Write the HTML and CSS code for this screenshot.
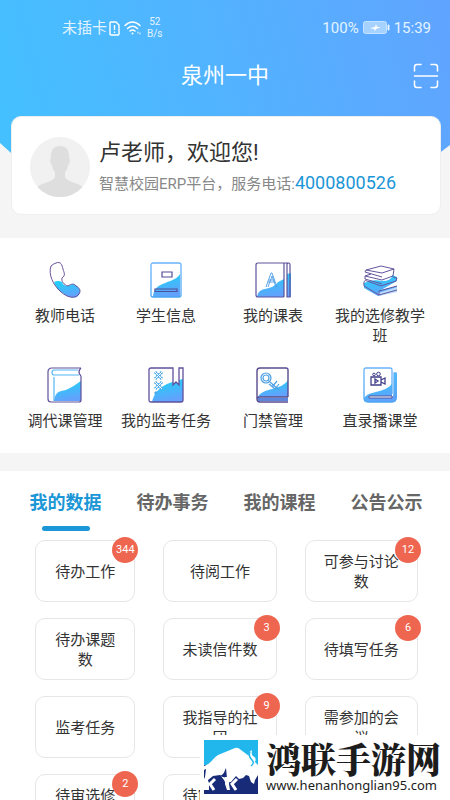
FILE: index.html
```html
<!DOCTYPE html>
<html lang="zh-CN">
<head>
<meta charset="utf-8">
<meta name="viewport" content="width=device-width, initial-scale=1">
<title>泉州一中</title>
<link rel="stylesheet" href="styles.css">
</head>
<body>
<svg class="defs" width="0" height="0" aria-hidden="true">
  <defs>
    <linearGradient id="fill" x1="0" y1="0" x2="0.3" y2="1">
      <stop offset="0.2" stop-color="#25cdfa"/><stop offset="1" stop-color="#62a2fc"/>
    </linearGradient>
    <linearGradient id="edge" x1="0" y1="0" x2="0" y2="1">
      <stop offset="0" stop-color="#69b2fb"/><stop offset="1" stop-color="#4aa6f2"/>
    </linearGradient>
  </defs>
</svg>
<div class="screen">
  <header class="hero">
    <div class="status">
      <span>未插卡</span>
      <svg class="sim" width="11" height="15" viewBox="0 0 11 15" fill="none" stroke="#fff" stroke-width="1.4"><path d="M1 2Q1 1 2 1h5l3 3v9q0 1-1 1H2q-1 0-1-1z"/><path d="M5.500 4v5M5.500 10.500v1.500"/></svg>
      <svg class="wifi" width="18" height="16" viewBox="0 0 18 16" fill="none" stroke="#fff" stroke-width="1.500" stroke-linecap="round"><path d="M1 5.500Q8.500-1.500 16 5.500M3.500 8.500q5-4.500 10 0M6 11q2.500-2 5 0"/><circle cx="8.500" cy="13.500" r="1" fill="#fff" stroke="none"/><path d="M14 12v1M16 13v1" stroke-width="1"/></svg>
      <span class="speed">52<br>B/s</span>
      <span class="percent">100%</span>
      <svg class="battery" width="27" height="14" viewBox="0 0 27 14"><rect x=".5" y=".5" width="23" height="12" rx="2" fill="#a6d2ff" stroke="#c6e3ff"/><path d="M25 4h1v5h-1z" fill="#e4f3ff" stroke="#e4f3ff"/><path d="M7 7l5-1 1-3 1 3h4l-5 2-1 2-1-2z" fill="#fff"/></svg>
      <span>15:39</span>
    </div>
    <div class="titlebar">
      <h1>泉州一中</h1>
      <button class="scan" aria-label="扫一扫"><svg width="26" height="26" viewBox="0 0 26 26" fill="none" stroke="#fff" stroke-width="1.500" stroke-linecap="round"><path d="M1.500 8V4q0-2.500 2.500-2.500h4M18 1.500h4q2.500 0 2.500 2.500v4M24.500 18v4q0 2.500-2.500 2.500h-4M8 24.500H4Q1.500 24.500 1.500 22v-4M1.500 13h23"/></svg></button>
    </div>
    <section class="welcome">
      <svg class="avatar" width="60" height="60" viewBox="0 0 60 60"><circle cx="30" cy="30" r="30" fill="#f1f1f1"/><path d="M30 9c7 0 9.500 5 9 12q1.500 1 .5 4.500-.5 2-1.500 2.500-.5 5-3 7v5c2 5 13 5.500 17.500 10A30 30 0 0 1 7.500 50C12 45.500 23 45 25 40v-5q-2.500-2-3-7-1-.5-1.500-2.500-1-3.500.5-4.500C20.500 14 23 9 30 9z" fill="#dedede"/></svg>
      <div>
        <h2>卢老师，欢迎您!</h2>
        <p>智慧校园ERP平台，服务电话:<a href="tel:4000800526">4000800526</a></p>
      </div>
    </section>
  </header>

  <nav class="apps">
    <a href="#"><svg viewBox="0 0 36 36"><path d="M7 20Q11 18 15 20q1 4 6 4l5-2q4 1 7 6 0 5-3 7-7 2-13-3Q9 27 7 20z" fill="url(#fill)"/><path d="M9 1c5-2 6 2 7 6s3 6-1 9c-1 3 2 7 6 8 3-2 6-3 8 0 4 2 5 5 3 8-4 5-11 4-18-2C6 23 1 12 4 4q2-2 5-3z" fill="none" stroke="#6a5299"/></svg><span>教师电话</span></a>
    <a href="#"><svg viewBox="0 0 36 36"><path d="M5 34C7 18 25 23 32 12v22q0 1-1 1H5z" fill="url(#fill)"/><rect x="3" y="1" width="30" height="34" rx="2" fill="none" stroke="url(#edge)" stroke-width="1.300"/><path d="M14 10h10v5H14zM7 27h22v2.500H7z" fill="none" stroke="#514d98" stroke-width="1.200"/></svg><span>学生信息</span></a>
    <a href="#"><svg viewBox="0 0 36 36"><path d="M2 35c2-12 14-5 21-15l6-3v18zM32 12l4-1v24h-4z" fill="url(#fill)"/><path d="M29 35H3q-2 0-2-2V3q0-2 2-2h26v34M32 35V2q0-1 2-1 1 0 1 2v32zM29 1h5" fill="none" stroke="#5c529b" stroke-width="1.200"/><path d="M11 25l5-14h1l5 14M13 20h7M13 25l4-11 4 11M14 18h5" fill="none" stroke="#499be6" stroke-width=".9"/></svg><span>我的课表</span></a>
    <a href="#"><svg viewBox="0 0 36 36"><path d="M2 21q8-4 18-2 10 0 10-6l5 2v4l-16 9 16-4v5l-19 5-14-8z" fill="url(#fill)"/><path d="M16 31l19-6v5l-18 4z" fill="#b9dcff"/><path d="M4 8l15-4 13 3-1 7-11 4M4 8l16 3 12-4M4 8l-1 2 17 5M20 18L3 14v3l17 5M3 14l6-2M31 15l4 1-1 3-15 5-14-5q-4-2-3 5l15 9 18-5M17 33v-4l18-5" fill="none" stroke="#65569f" stroke-width="1" stroke-linejoin="round"/></svg><span>我的选修教学班</span></a>
    <a href="#"><svg viewBox="0 0 36 36"><path d="M7 34C9 22 15 25 21 22S28 18 34 14v20z" fill="url(#fill)"/><path d="M34 1H5Q1 1 1 5v27q0 3 3 3h28q2 0 2-2V9M34 1q-4 4 0 8" fill="none" stroke="#615099" stroke-width="1.200"/><path d="M31 3H7Q5 3 5 5.500T7 8h25M7 10v24" fill="none" stroke="#54b6f5" stroke-width="1.200"/></svg><span>调代课管理</span></a>
    <a href="#"><svg viewBox="0 0 36 36"><path d="M4 35C7 21 18 16 35 12v23z" fill="url(#fill)"/><path d="M25 1h6v17l-3-3-3 3z" fill="#fff"/><path d="M31 1h4v32q0 2-2 2H3q-2 0-2-2V3q0-2 2-2h22v17l3-3 3 3z" fill="none" stroke="#60509d" stroke-width="1.300"/><path d="M7 5l7 7m0-7l-7 7m0 3l7 7m0-7l-7 7M7 25l2 2" stroke="#4ea8e7" stroke-width="3" fill="none" stroke-dasharray="2 .6"/><path d="M7 5l7 7m0-7l-7 7m0 3l7 7m0-7l-7 7" stroke="#fff" stroke-width="1" fill="none"/></svg><span>我的监考任务</span></a>
    <a href="#"><svg viewBox="0 0 36 36"><path d="M3 30C8 20 26 24 33 13v17z" fill="url(#fill)"/><path d="M33 30V3q0-2-2-2H5Q2 1 2 4v28q0 3 3 3h28M33 30H5q-3 0-3 2" fill="none" stroke="#584b8d" stroke-width="1.400"/><path d="M3 32.500h30" stroke="#5b86dc" stroke-width="3"/><g fill="none" stroke="#4c9fe3" stroke-width="1.200"><circle cx="11" cy="11" r="5"/><circle cx="11" cy="11" r="3"/><path d="M15 15l9 8M17 20l5-6M20 22l4-5M14 17l6 5"/></g></svg><span>门禁管理</span></a>
    <a href="#"><svg viewBox="0 0 36 36"><path d="M2 31C8 23 21 27 30 17v13l2-3V6h3v24q0 5-5 5H6q-4 0-4-4z" fill="url(#fill)"/><path d="M30 27V3q0-2-2-2H4Q2 1 2 3v28q0 4 4 4h24q4 0 4-4V6h-2v22" fill="none" stroke="url(#edge)" stroke-width="1.300"/><path d="M7 29h23v2H7z" fill="#fff" stroke="#4e559e"/><path d="M9 10h10v8H9zM19 13l4-2v6l-4-2M13 12l3 2-3 2z" fill="none" stroke="#403e88" stroke-width="1.300"/><circle cx="12" cy="7.500" r="1.300" fill="none" stroke="#403e88"/><circle cx="16.500" cy="7" r="1.800" fill="none" stroke="#403e88"/></svg><span>直录播课堂</span></a>
  </nav>

  <main class="data">
    <div class="tabs" role="tablist">
      <button role="tab" aria-selected="true">我的数据</button>
      <button role="tab" aria-selected="false">待办事务</button>
      <button role="tab" aria-selected="false">我的课程</button>
      <button role="tab" aria-selected="false">公告公示</button>
    </div>
    <div class="cards">
      <a href="#">待办工作<b>344</b></a>
      <a href="#">待阅工作</a>
      <a href="#">可参与讨论数<b>12</b></a>
      <a href="#">待办课题数</a>
      <a href="#">未读信件数<b>3</b></a>
      <a href="#">待填写任务<b>6</b></a>
      <a href="#">监考任务</a>
      <a href="#">我指导的社团<b>9</b></a>
      <a href="#">需参加的会议</a>
      <a href="#">待审选修课<b>2</b></a>
      <a href="#">待审社团活动</a>
    </div>
  </main>

  <aside class="brand">
    <svg width="54" height="54" viewBox="0 0 54 54"><path fill="#21b7ec" d="M0 0h54v26H0z"/><path fill="#172b78" d="M0 25h54v29H0z"/><path fill="#fff" d="M0 26C7 24 9 18 14 15L31 8q3-1 6 2l8 6q-1-4 3-6-1 4 1 6 4 2 2 6l3 3v10l-3 5-1 4-3-2-2-6-3-1-3 3-4 1-3-3-5 6h-6l-1-2-4-5-7 1-5 4-2 5-2-1-2 5z"/><path fill="#172b78" d="M0 30l2-1-1 8-1 2zM21 30l1-2 1 10-8-2q5-1 6-6z"/><path fill="#fff" d="M0 42l3-4 2 5v7H0zM21 37h5l-1 7 1 6h-3l-2-6z"/><path d="M11 39l-5 5 4 6M33 39l-5 5 4 6" fill="none" stroke="#fff" stroke-width="3"/><path d="M46 12q-2 4 2 8 3 3-1 6" fill="none" stroke="#21b7ec" stroke-width="1.500"/></svg>
    <div><strong>鸿联手游网</strong><span>www.henanhonglian95.com</span></div>
  </aside>
</div>
</body>
</html>
```
FILE: styles.css
```css
* { box-sizing: border-box; }
body {
  margin: 0;
  background: #f5f5f5;
  color: #333;
  font: 15px/20px Roboto, "Noto Sans CJK SC", sans-serif;
}
h1, h2, p { margin: 0; font-weight: 400; }
a { color: inherit; text-decoration: none; }
button { border: 0; padding: 0; background: none; font: inherit; color: inherit; }
svg { display: block; flex: none; }
.defs { position: absolute; }

.screen {
  position: relative;
  height: 100vh;
  overflow: hidden;
}

.hero {
  position: relative;
  z-index: 0;
  padding: 14px 9px 23px 11px;
  color: #fff;
}
.hero::before {
  content: "";
  position: absolute;
  inset: 0 0 38px;
  z-index: -1;
  background: linear-gradient(75deg, #43c1ff, #52b3ff 50%, #60a4ff);
  clip-path: polygon(0 0, 100% 0, 100% 145px, 84% 100%, 14% 100%, 0 143px);
}
.status {
  display: flex;
  align-items: center;
  height: 28px;
  padding: 0 10px 0 51px;
  color: #e4f4ff;
}
.sim { margin: 0 4px 0 2px; }
.speed { margin-left: 5px; font-size: 10px; line-height: 12px; text-align: center; }
.percent { margin-left: auto; }
.battery { margin: 0 4px; }

.titlebar {
  display: grid;
  grid-template-columns: 26px 1fr 26px;
  align-items: center;
  height: 68px;
  margin-bottom: 6px;
  padding: 0 2px 0 0;
}
.titlebar h1 { grid-column: 2; font-size: 22px; line-height: 28px; text-align: center; }

.welcome {
  display: flex;
  align-items: center;
  gap: 9px;
  min-height: 99px;
  padding: 3px 18px 0;
  border: 1px solid #eee;
  border-radius: 10px;
  background: #fff;
}
.welcome h2 { font-size: 22px; line-height: 32px; color: #333; }
.welcome p { line-height: 28px; color: #888; white-space: nowrap; }
.welcome a { font-size: 18px; color: #1b96d6; }

.apps {
  display: grid;
  grid-template-columns: 106fr 96fr 118fr 96fr;
  row-gap: 21px;
  padding: 24px 22px 22px 12px;
  background: #fff;
}
.apps a {
  display: flex;
  flex-direction: column;
  align-items: center;
  gap: 8px;
  text-align: center;
}
.apps svg { width: 36px; height: 36px; }

.data {
  margin-top: 18px;
  padding: 18px 10px 24px 12px;
  background: #fff;
}
.tabs { display: grid; grid-template-columns: repeat(4, 1fr); }
.tabs button {
  display: flex;
  flex-direction: column;
  align-items: center;
  gap: 10px;
  height: 51px;
  font-size: 18px;
  line-height: 27px;
  font-weight: 700;
  color: #666;
}
.tabs [aria-selected="true"] { color: #1b96d6; }
.tabs [aria-selected="true"]::after {
  content: "";
  width: 48px;
  height: 5px;
  border-radius: 3px;
  background: #1b96d6;
}
.cards {
  display: grid;
  grid-template-columns: 100fr 113fr 113fr;
  gap: 16px 28px;
  padding: 0 22px 0 23px;
}
.cards a {
  position: relative;
  display: flex;
  align-items: center;
  justify-content: center;
  height: 62px;
  padding: 2px 15px 0;
  border: 1px solid #e6e6e6;
  border-radius: 10px;
  text-align: center;
}
.cards b {
  position: absolute;
  top: -4px;
  right: -4px;
  width: 26px;
  height: 26px;
  border-radius: 50%;
  background: #ee6650;
  color: #fff;
  font-size: 11px;
  line-height: 26px;
  font-weight: 400;
}

.brand {
  position: absolute;
  right: 0;
  bottom: 0;
  display: flex;
  gap: 8px;
  padding: 5px 9px 6px 4px;
  background: #fff;
  color: #1c1c1c;
}
.brand div { display: flex; flex-direction: column; }
.brand strong {
  font: 900 35px/36px "Noto Serif CJK SC", "Noto Sans CJK SC", serif;
}
.brand span { font: 13px/18px "Noto Sans", sans-serif; }
```
